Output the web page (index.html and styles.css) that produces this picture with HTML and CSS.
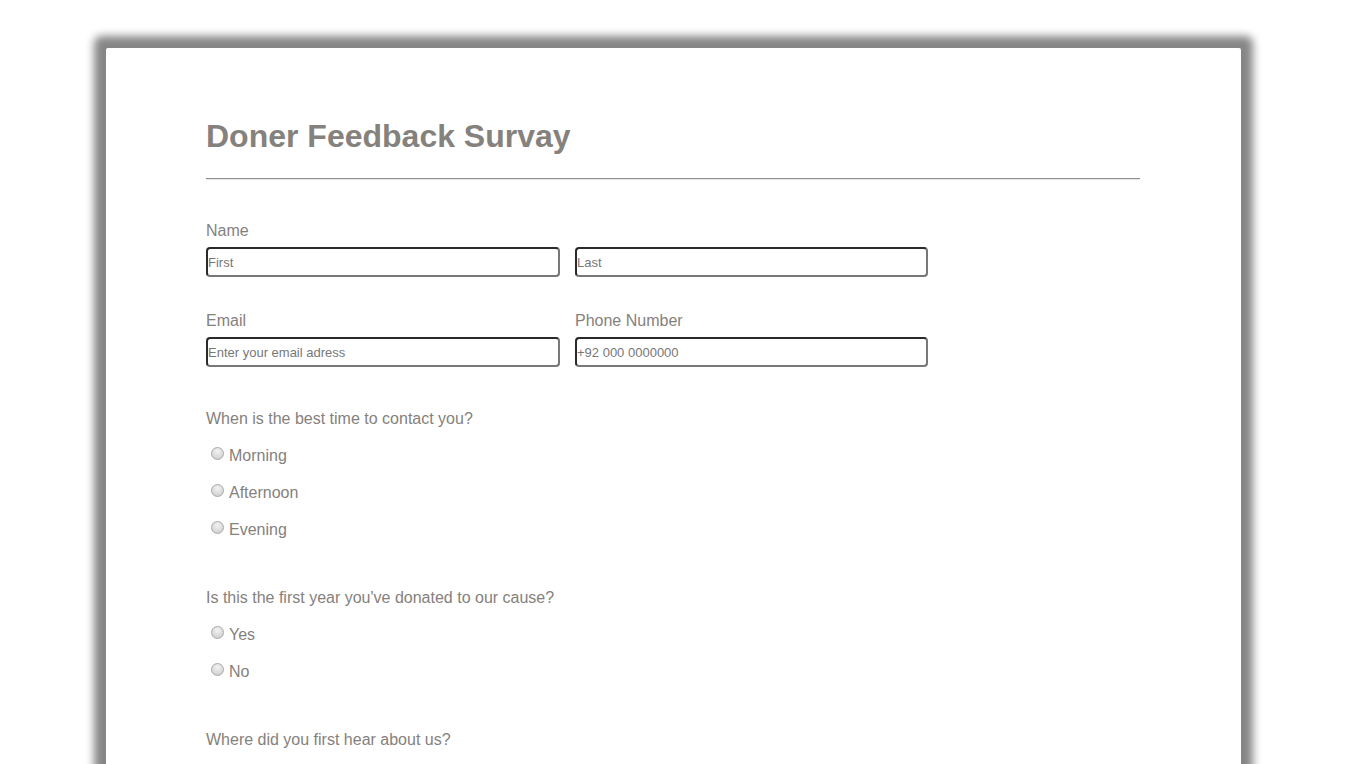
FILE: index.html
```html
<!DOCTYPE html>
<html>
<head>
<meta charset="utf-8">
<title>Doner Feedback Survay</title>
<link rel="stylesheet" href="styles.css">
</head>
<body>
<div class="card">
  <h1 class="title">Doner Feedback Survay</h1>
  <hr class="rule">
  <form class="form">
    <div class="group">
      <div class="label">Name</div>
      <div class="row">
        <input class="field" type="text" placeholder="First">
        <input class="field" type="text" placeholder="Last">
      </div>
    </div>
    <div class="row group2">
      <div class="col">
        <div class="label">Email</div>
        <input class="field" type="text" placeholder="Enter your email adress">
      </div>
      <div class="col">
        <div class="label">Phone Number</div>
        <input class="field" type="text" placeholder="+92 000 0000000">
      </div>
    </div>
    <div class="question">
      <div class="label">When is the best time to contact you?</div>
      <div class="options">
        <label class="opt"><input class="radio" type="radio" name="time">Morning</label>
        <label class="opt"><input class="radio" type="radio" name="time">Afternoon</label>
        <label class="opt"><input class="radio" type="radio" name="time">Evening</label>
      </div>
    </div>
    <div class="question">
      <div class="label">Is this the first year you've donated to our cause?</div>
      <div class="options">
        <label class="opt"><input class="radio" type="radio" name="first">Yes</label>
        <label class="opt"><input class="radio" type="radio" name="first">No</label>
      </div>
    </div>
    <div class="question last">
      <div class="label">Where did you first hear about us?</div>
    </div>
  </form>
</div>
</body>
</html>
```
FILE: styles.css
```css
html, body {
  margin: 0;
  padding: 0;
  background: #fff;
}
body {
  font-family: "Liberation Sans", Arial, sans-serif;
  color: #85817d;
  padding: 48px 0 60px 106px;
}
.card {
  width: 1135px;
  box-sizing: border-box;
  background: #fff;
  padding: 70px 101px 120px 100px;
  box-shadow: 0 0 8px 12px #868686;
  border-radius: 2px;
}
.title {
  margin: 0;
  font-size: 32px;
  line-height: 37px;
  font-weight: bold;
  color: #85817d;
}
.rule {
  margin: 23px 0 0 0;
  border: 0;
  border-top: 1px solid #8f8f8f;
  border-bottom: 1px solid #e6e6e6;
  height: 0;
}
.form {
  display: flex;
  flex-direction: column;
  padding-top: 42px;
}
.label {
  font-size: 16px;
  line-height: 18px;
  color: #85817d;
}
.row {
  display: flex;
  gap: 15px;
}
.group .row {
  margin-top: 7px;
}
.group2 {
  margin-top: 35px;
}
.col {
  display: flex;
  flex-direction: column;
  gap: 7px;
}
.field {
  width: 354px;
  height: 30px;
  box-sizing: border-box;
  margin: 0;
  padding: 0;
  border: 2px solid;
  border-color: #2a2a2a #787878 #787878 #2a2a2a;
  border-radius: 4px;
  font-family: "Liberation Sans", Arial, sans-serif;
  font-size: 13px;
  color: #555;
  background: #fff;
  outline: none;
}
.field + .field,
.col + .col .field {
  width: 353px;
}
.field::placeholder {
  color: #777;
}
.question {
  margin-top: 43px;
}
.question + .question {
  margin-top: 49px;
}
.options {
  display: flex;
  flex-direction: column;
  gap: 17px;
  margin-top: 18px;
}
.opt {
  display: block;
  font-size: 16px;
  line-height: 20px;
  color: #85817d;
}
.radio {
  -webkit-appearance: none;
  appearance: none;
  display: inline-block;
  box-sizing: border-box;
  margin: 0 5px 0 5px;
  width: 13px;
  height: 13px;
  border-radius: 50%;
  border: 1px solid #a9a9a9;
  background: radial-gradient(circle at 50% 30%, #f2f2f2 0%, #dcdcdc 55%, #c8c8c8 100%);
  vertical-align: 1px;
}
```
